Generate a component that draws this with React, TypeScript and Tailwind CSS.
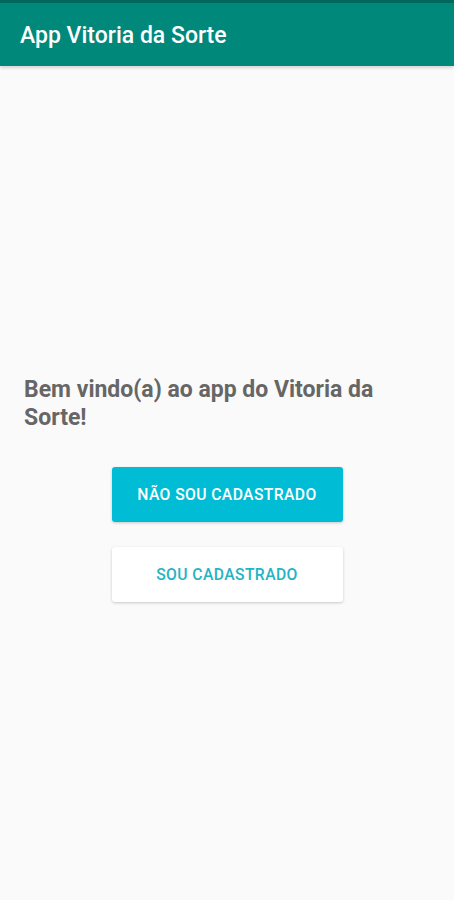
import React from "react";

const App = () => {
  return (
    <div className="min-h-[900px] w-full bg-[#fafafa] font-['Roboto',sans-serif]">
      <div className="h-[3px] bg-[#00695c]" />
      <header className="flex h-[63px] items-center bg-[#00897b] px-5 pt-[3px] shadow-[0_2px_3px_rgba(0,0,0,0.15)]">
        <h1 className="text-[23px] font-medium text-white">App Vitoria da Sorte</h1>
      </header>
      <main className="flex flex-col px-6 pt-[310px]">
        <p className="text-[23px] font-bold leading-[28px] text-[#666666]">
          Bem vindo(a) ao app do Vitoria da Sorte!
        </p>
        <div className="mt-[35px] flex flex-col items-center gap-[25px]">
          <button className="h-[55px] w-[231px] rounded-[3px] bg-[#00bcd4] text-[15.7px] font-medium tracking-[0.4px] text-white shadow-[0_1px_3px_rgba(0,0,0,0.2)]">
            NÃO SOU CADASTRADO
          </button>
          <button className="h-[55px] w-[231px] rounded-[3px] bg-white text-[15.7px] font-medium tracking-[0.4px] text-[#26b3c4] shadow-[0_1px_3px_rgba(0,0,0,0.2)]">
            SOU CADASTRADO
          </button>
        </div>
      </main>
    </div>
  );
};

export default App;
